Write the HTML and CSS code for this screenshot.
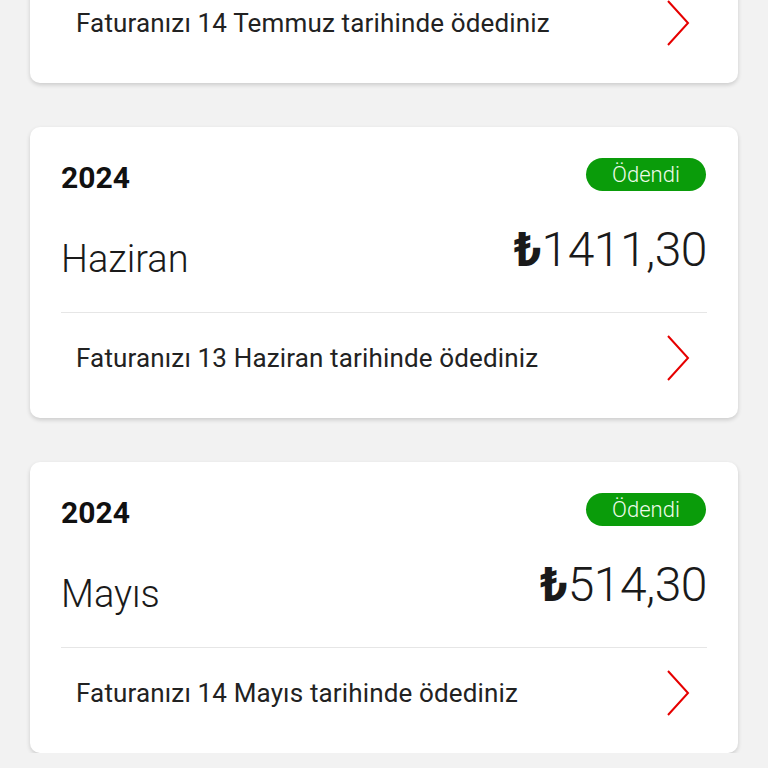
FILE: index.html
```html
<!DOCTYPE html>
<html>
<head>
<meta charset="utf-8">
<link rel="stylesheet" href="styles.css">
</head>
<body>

<div class="list">

<div class="card">
<div class="head"><span class="year">2024</span><span class="badge">Ödendi</span></div>
<div class="main"><span class="month">Temmuz</span><span class="amount"><b class="cur">₺</b>1411,30</span></div>
<div class="rule"></div>
<div class="foot"><span class="note">Faturanızı 14 Temmuz tarihinde ödediniz</span>
<svg class="chev" width="26" height="48" viewBox="0 0 26 48"><path d="M3 2 L23 24 L3 46" fill="none" stroke="#e60000" stroke-width="2"/></svg></div>
</div>

<div class="card">
<div class="head"><span class="year">2024</span><span class="badge">Ödendi</span></div>
<div class="main"><span class="month">Haziran</span><span class="amount"><b class="cur">₺</b>1411,30</span></div>
<div class="rule"></div>
<div class="foot"><span class="note">Faturanızı 13 Haziran tarihinde ödediniz</span>
<svg class="chev" width="26" height="48" viewBox="0 0 26 48"><path d="M3 2 L23 24 L3 46" fill="none" stroke="#e60000" stroke-width="2"/></svg></div>
</div>

<div class="card">
<div class="head"><span class="year">2024</span><span class="badge">Ödendi</span></div>
<div class="main"><span class="month">Mayıs</span><span class="amount"><b class="cur">₺</b>514,30</span></div>
<div class="rule"></div>
<div class="foot"><span class="note">Faturanızı 14 Mayıs tarihinde ödediniz</span>
<svg class="chev" width="26" height="48" viewBox="0 0 26 48"><path d="M3 2 L23 24 L3 46" fill="none" stroke="#e60000" stroke-width="2"/></svg></div>
</div>

</div>

</body>
</html>
```

FILE: styles.css
```css
body {
margin: 0;
background: #f2f2f2;
font-family: Roboto, "Liberation Sans", sans-serif;
color: #1a1a1a;
overflow: hidden;
}

.list {
display: flex;
flex-direction: column;
gap: 44px;
padding: 0 30px;
margin-top: -208px;
}

.card {
background: #fff;
border-radius: 10px;
padding: 31px 31px 15px;
box-shadow: 0 2px 4px rgba(0, 0, 0, 0.16);
}

.head {
display: flex;
justify-content: space-between;
align-items: center;
height: 33px;
}

.year {
font-size: 30px;
font-weight: 700;
line-height: 1;
color: #111;
margin-top: 7px;
}

.badge {
width: 120px;
height: 33px;
border-radius: 17px;
background: #0a9c0a;
color: #eefbe9;
font-size: 22px;
font-weight: 300;
line-height: 33px;
text-align: center;
margin-right: 1px;
}

.main {
display: flex;
justify-content: space-between;
align-items: flex-start;
}

.month {
font-size: 38px;
font-weight: 300;
line-height: 1;
margin-top: 49px;
}

.amount {
font-size: 48px;
font-weight: 300;
line-height: 1;
margin-top: 35px;
letter-spacing: -0.5px;
}

.cur {
font-weight: 700;
}

.rule {
border-top: 1px solid #e6e6e6;
margin-top: 34px;
}

.foot {
height: 90px;
display: flex;
justify-content: space-between;
align-items: center;
padding: 0 16px 0 15px;
}

.note {
font-size: 26px;
letter-spacing: 0.15px;
color: #222;
}

.chev {
display: block;
}
```
